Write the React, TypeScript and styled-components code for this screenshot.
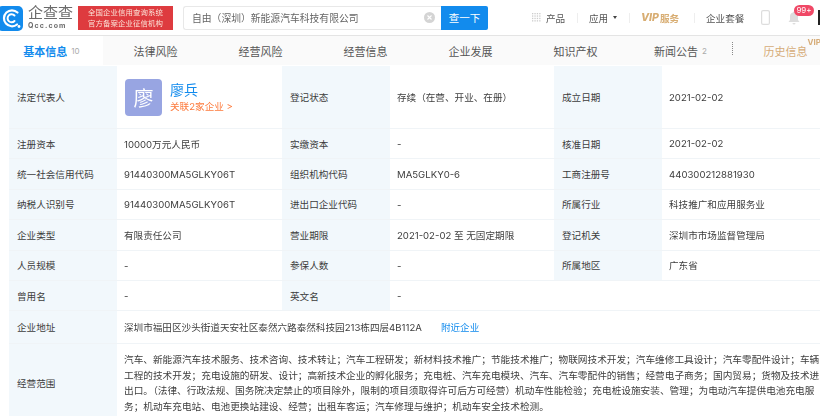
import React from 'react'
import styled, { createGlobalStyle } from 'styled-components'

const GlobalStyle = createGlobalStyle`
  html, body {
    margin: 0;
    padding: 0;
    background: #fff;
    overflow: hidden;
  }
  body {
    font-family: Inter, "Noto Sans CJK SC", sans-serif;
    color: #3d3d3d;
  }
`

const Page = styled.div`
  width: 820px;
  height: 416px;
  overflow: hidden;
  filter: blur(0.3px);
`

const Header = styled.header`
  display: flex;
  align-items: center;
  height: 35px;
  border-bottom: 1px solid #e4e4e4;
  position: relative;
`

const LogoBlock = styled.div`
  display: flex;
  align-items: center;
  width: 173px;
  flex: none;
`

const LogoText = styled.div`
  display: flex;
  flex-direction: column;
  width: 45px;
  margin-left: 4px;
  color: #6b6b6b;
  flex: none;
`

const LogoName = styled.span`
  height: 16px;
  font-size: 15px;
  line-height: 15px;
  white-space: nowrap;
`

const LogoUrl = styled.span`
  height: 9px;
  font-size: 7px;
  line-height: 9px;
  font-weight: 700;
  letter-spacing: 1.1px;
  white-space: nowrap;
`

const Slogan = styled.div`
  width: 95px;
  height: 24px;
  margin-left: 5px;
  flex: none;
  background: #de3b3f;
  color: #fbe3d8;
  font-size: 7.4px;
  line-height: 11px;
  text-align: center;
  padding-top: 1px;
  box-sizing: border-box;
  letter-spacing: 0.1px;
  white-space: nowrap;
`

const SearchBox = styled.div`
  display: flex;
  align-items: center;
  justify-content: space-between;
  width: 258px;
  height: 24px;
  margin-left: 10px;
  flex: none;
  box-sizing: border-box;
  border: 1px solid #e8e8e8;
  border-right: 0;
  border-radius: 3px 0 0 3px;
  padding: 0 6px 0 8px;
  font-size: 9.8px;
  color: #666;
  white-space: nowrap;
`

const SearchButton = styled.button`
  width: 47px;
  height: 24px;
  flex: none;
  border: 0;
  padding: 0;
  background: #128bed;
  color: #fff;
  font: inherit;
  font-size: 10.5px;
  border-radius: 0 2px 2px 0;
`

const HeaderNav = styled.nav`
  display: flex;
  align-items: center;
  margin-left: 44px;
  font-size: 9.6px;
  color: #555;
  white-space: nowrap;
`

const NavItem = styled.span<{ $width: number; $inset?: boolean }>`
  display: flex;
  align-items: center;
  gap: 5px;
  box-sizing: border-box;
  width: ${(p) => p.$width}px;
  padding-left: ${(p) => (p.$inset ? 11 : 0)}px;
  height: 12px;
  flex: none;
`

const NavDivider = styled.i`
  width: 1px;
  height: 10px;
  background: #eee;
  flex: none;
`

const VipLabel = styled.span`
  font-weight: 800;
  font-style: italic;
  font-size: 10.5px;
  color: #d8ad72;
`

const VipText = styled.span`
  color: #d8ad72;
  font-weight: 700;
  margin-left: -4px;
`

const Caret = styled.i`
  width: 0;
  height: 0;
  border-left: 2.5px solid transparent;
  border-right: 2.5px solid transparent;
  border-top: 3px solid #444;
`

const PhoneSlot = styled.span`
  display: inline-flex;
  margin-left: 8px;
`

const BellWrap = styled.span`
  position: relative;
  display: inline-flex;
  margin-left: 18px;
`

const Badge = styled.span`
  position: absolute;
  top: -6px;
  left: 6px;
  width: 20px;
  height: 11px;
  text-align: center;
  border-radius: 6px;
  background: #f04866;
  color: #fff;
  font-size: 8px;
  line-height: 11px;
`

const EdgeMark = styled.i`
  position: absolute;
  right: 0;
  top: 10px;
  width: 2px;
  height: 15px;
  background: #222;
`

const Tabs = styled.div`
  display: flex;
  align-items: center;
  height: 29px;
  background: #fafafa;
  white-space: nowrap;
  font-size: 11px;
  color: #555;
  position: relative;
`

const ActiveTab = styled.div`
  display: flex;
  align-items: center;
  justify-content: center;
  gap: 4px;
  width: 103px;
  height: 100%;
  flex: none;
  background: #fff;
  color: #128bed;
  font-weight: 700;
`

const Tab = styled.div<{ $gold?: boolean }>`
  display: flex;
  align-items: center;
  justify-content: center;
  gap: 4px;
  width: 105px;
  flex: none;
  color: ${(p) => (p.$gold ? '#d6ac78' : '#555')};
`

const TabCount = styled.span`
  font-size: 8px;
  font-weight: 400;
  color: #aaa;
`

const TabDots = styled.span`
  position: absolute;
  left: 732px;
  top: 6px;
  width: 1px;
  height: 13px;
  border-left: 1px dotted #888;
`

const VipCorner = styled.span`
  position: absolute;
  right: -1px;
  top: 1px;
  font-size: 8px;
  line-height: 10px;
  font-weight: 700;
  color: #d6ac78;
`

const InfoTable = styled.div`
  display: grid;
  grid-template-columns: 108px 165px 108px 164px 108px 158px;
  grid-template-rows: 63px repeat(6, 30.4px) 33px 1fr;
  width: 811px;
  margin-left: 9px;
  height: 357px;
  margin-top: 1px;
  font-size: 9.6px;
`

const Label = styled.div`
  display: flex;
  align-items: center;
  padding-left: 8px;
  background: #f2f8fc;
  border-bottom: 1px solid #f0f4f7;
  white-space: nowrap;
  font-family: "Noto Sans", "Noto Sans CJK SC", sans-serif;
`

const Value = styled.div<{ $span?: number }>`
  display: flex;
  align-items: center;
  padding-left: 7px;
  min-width: 0;
  border-bottom: 1px solid #f0f4f7;
  white-space: nowrap;
  overflow: hidden;
  grid-column: span ${(p) => p.$span ?? 1};
`

const Person = styled.div`
  display: flex;
  align-items: center;
  gap: 7px;
  margin-left: 1px;
`

const Avatar = styled.div`
  display: flex;
  align-items: center;
  justify-content: center;
  width: 37px;
  height: 37px;
  border-radius: 4px;
  background: #98a5e2;
  color: #fff;
  font-size: 20px;
`

const PersonInfo = styled.div`
  display: flex;
  flex-direction: column;
  margin-left: 1px;
`

const PersonName = styled.span`
  color: #128bed;
  font-size: 14px;
  line-height: 20px;
`

const Related = styled.span`
  color: #fd7a3c;
  font-size: 9.6px;
  line-height: 14px;
`

const NearbyLink = styled.span`
  margin-left: 19px;
  color: #128bed;
`

const Scope = styled.div`
  grid-column: span 5;
  padding: 8px 0 0 7px;
  font-size: 9.66px;
  line-height: 15.5px;
  white-space: nowrap;
  overflow: hidden;
`

const LogoIcon = () => (
  <svg width="24" height="26" viewBox="0 0 24 26">
    <rect x="-3" y="1" width="26" height="25" rx="5" fill="#128bed" />
    <path d="M17.500 7.500A8 8 0 1 0 17 19.500" fill="none" stroke="#fff" strokeWidth="2.2" strokeLinecap="round" />
    <path d="M14.500 10.500a4 4 0 1 0 0 5.500" fill="none" stroke="#fff" strokeWidth="2" strokeLinecap="round" />
    <circle cx="19" cy="21.500" r="1.400" fill="#fff" />
  </svg>
)

const ClearIcon = () => (
  <svg width="11" height="11" viewBox="0 0 11 11">
    <circle cx="5.500" cy="5.500" r="5.500" fill="#d4d4d4" />
    <path d="M3.500 3.500l4 4M7.500 3.500l-4 4" stroke="#fff" strokeWidth="1.100" />
  </svg>
)

const GridIcon = () => (
  <svg width="9" height="9" viewBox="0 0 9 9" fill="#ccc">
    {[0, 1, 2, 3].flatMap((r) =>
      [0, 1, 2, 3].map((c) => <rect key={`${r}-${c}`} x={c * 2.4} y={r * 2.4} width="1.300" height="1.300" />),
    )}
  </svg>
)

const PhoneIcon = () => (
  <svg width="9" height="15" viewBox="0 0 9 15">
    <rect x="0.600" y="0.600" width="7.800" height="13.800" rx="1.500" fill="none" stroke="#ddd" strokeWidth="1.200" />
  </svg>
)

const BellIcon = () => (
  <svg width="12" height="14" viewBox="0 0 12 14" fill="#ddd">
    <path d="M6 0.500a1 1 0 0 1 1 1A4 4 0 0 1 10 5.500v3.500l1.500 2H.5L2 9V5.500A4 4 0 0 1 5 1.500a1 1 0 0 1 1-1z" />
    <path d="M4.500 12h3a1.500 1.500 0 0 1-3 0z" />
  </svg>
)

const scopeLines = [
  '汽车、新能源汽车技术服务、技术咨询、技术转让；汽车工程研发；新材料技术推广；节能技术推广；物联网技术开发；汽车维修工具设计；汽车零配件设计；车辆',
  '工程的技术开发；充电设施的研发、设计；高新技术企业的孵化服务；充电桩、汽车充电模块、汽车、汽车零配件的销售；经营电子商务；国内贸易；货物及技术进',
  '出口。（法律、行政法规、国务院决定禁止的项目除外，限制的项目须取得许可后方可经营）机动车性能检验；充电桩设施安装、管理；为电动汽车提供电池充电服',
  '务；机动车充电站、电池更换站建设、经营；出租车客运；汽车修理与维护；机动车安全技术检测。',
]

const rows = [
  ['注册资本', '10000万元人民币', '实缴资本', '-', '核准日期', '2021-02-02'],
  ['统一社会信用代码', '91440300MA5GLKY06T', '组织机构代码', 'MA5GLKY0-6', '工商注册号', '440300212881930'],
  ['纳税人识别号', '91440300MA5GLKY06T', '进出口企业代码', '-', '所属行业', '科技推广和应用服务业'],
  ['企业类型', '有限责任公司', '营业期限', '2021-02-02 至 无固定期限', '登记机关', '深圳市市场监督管理局'],
  ['人员规模', '-', '参保人数', '-', '所属地区', '广东省'],
  ['曾用名', '-', '英文名', '-', '', ''],
]

export default function App() {
  return (
    <Page>
      <GlobalStyle />
      <Header>
        <LogoBlock>
          <LogoIcon />
          <LogoText>
            <LogoName>企查查</LogoName>
            <LogoUrl>Qcc.com</LogoUrl>
          </LogoText>
          <Slogan>
            全国企业信用查询系统
            <br />
            官方备案企业征信机构
          </Slogan>
        </LogoBlock>
        <SearchBox>
          自由（深圳）新能源汽车科技有限公司
          <ClearIcon />
        </SearchBox>
        <SearchButton>查一下</SearchButton>
        <HeaderNav>
          <NavItem $width={45}>
            <GridIcon />
            产品
          </NavItem>
          <NavDivider />
          <NavItem $width={51} $inset>
            应用
            <Caret />
          </NavItem>
          <NavDivider />
          <NavItem $width={64} $inset>
            <VipLabel>VIP</VipLabel>
            <VipText>服务</VipText>
          </NavItem>
          <NavDivider />
          <NavItem $width={58} $inset>
            企业套餐
          </NavItem>
          <PhoneSlot>
            <PhoneIcon />
          </PhoneSlot>
          <BellWrap>
            <BellIcon />
            <Badge>99+</Badge>
          </BellWrap>
        </HeaderNav>
        <EdgeMark />
      </Header>
      <Tabs>
        <ActiveTab>
          基本信息
          <TabCount>10</TabCount>
        </ActiveTab>
        <Tab>法律风险</Tab>
        <Tab>经营风险</Tab>
        <Tab>经营信息</Tab>
        <Tab>企业发展</Tab>
        <Tab>知识产权</Tab>
        <Tab>
          新闻公告
          <TabCount>2</TabCount>
        </Tab>
        <Tab $gold>历史信息</Tab>
        <TabDots />
        <VipCorner>VIP</VipCorner>
      </Tabs>
      <InfoTable>
        <Label>法定代表人</Label>
        <Value>
          <Person>
            <Avatar>廖</Avatar>
            <PersonInfo>
              <PersonName>廖兵</PersonName>
              <Related>关联2家企业 &gt;</Related>
            </PersonInfo>
          </Person>
        </Value>
        <Label>登记状态</Label>
        <Value>存续（在营、开业、在册）</Value>
        <Label>成立日期</Label>
        <Value>2021-02-02</Value>
        {rows.map((cells) =>
          cells.map((text, i) =>
            i % 2 === 0 ? (
              text ? (
                <Label key={cells[0] + i}>{text}</Label>
              ) : (
                <Value key={cells[0] + i} />
              )
            ) : (
              <Value key={cells[0] + i}>{text}</Value>
            ),
          ),
        )}
        <Label>企业地址</Label>
        <Value $span={5}>
          深圳市福田区沙头街道天安社区泰然六路泰然科技园213栋四层4B112A
          <NearbyLink>附近企业</NearbyLink>
        </Value>
        <Label>经营范围</Label>
        <Scope>
          {scopeLines.map((line) => (
            <div key={line}>{line}</div>
          ))}
        </Scope>
      </InfoTable>
    </Page>
  )
}
